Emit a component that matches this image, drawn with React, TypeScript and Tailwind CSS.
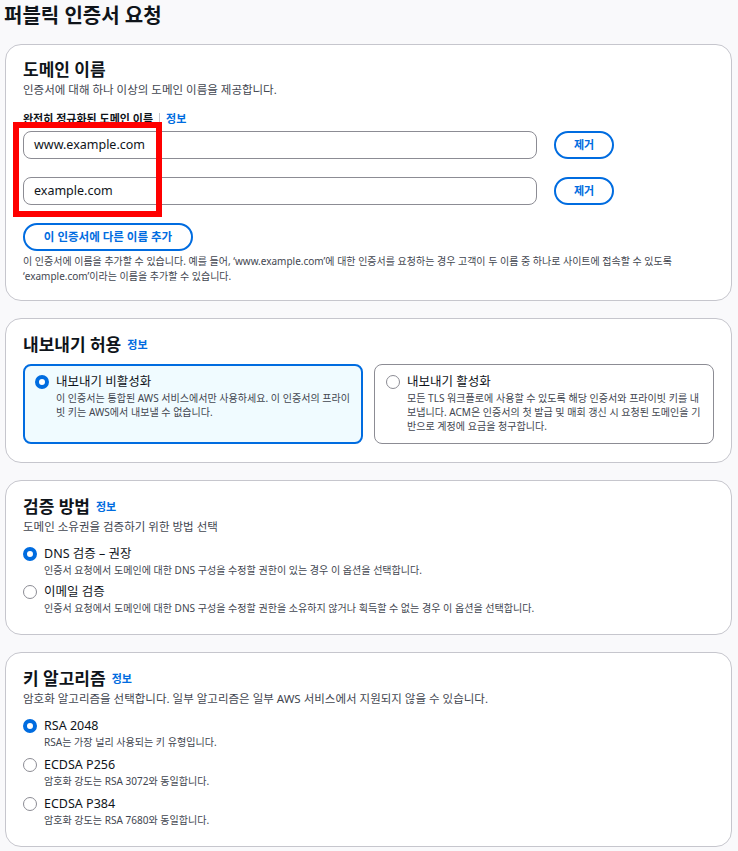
import React from "react";

const FONT = { fontFamily: '"Noto Sans", "Noto Sans CJK KR", sans-serif' };

function Radio({ checked }: { checked: boolean }) {
  return checked ? (
    <span className="mt-[2px] box-border inline-block h-[14px] w-[14px] shrink-0 rounded-full border-[4px] border-[#006ce0] bg-white" />
  ) : (
    <span className="mt-[2px] box-border inline-block h-[14px] w-[14px] shrink-0 rounded-full border-[1.5px] border-[#8c8c94] bg-white" />
  );
}

function Info() {
  return <span className="ml-[6px] text-[11px] font-bold text-[#006ce0]">정보</span>;
}

function Option({ checked, label, desc }: { checked: boolean; label: string; desc: string }) {
  return (
    <div className="flex gap-[7px]">
      <Radio checked={checked} />
      <div className="flex flex-col">
        <span className="text-[12.5px] leading-[18px] text-[#0f141a]">{label}</span>
        <span className="text-[10.05px] leading-[14px] text-[#424650]">{desc}</span>
      </div>
    </div>
  );
}

function Card({ children, className = "" }: { children: React.ReactNode; className?: string }) {
  return (
    <div className={"rounded-[16px] border border-[#c6c6cd] bg-white px-[17px] " + className}>{children}</div>
  );
}

export default function App() {
  return (
    <div style={FONT} className="relative min-h-screen bg-[#f9f9fb] pl-[5px] pr-[6px] pb-4 text-[#0f141a]">
      <h1 className="-ml-[1px] pt-[3px] text-[20px] font-bold leading-[26px]">퍼블릭 인증서 요청</h1>
      <div className="mt-[15px] flex flex-col gap-[17px]">
        {/* Domain names */}
        <Card className="pt-[14px] pb-[16px]">
          <h2 className="text-[17px] font-bold leading-[22px]">도메인 이름</h2>
          <p className="mt-[1px] text-[11.5px] leading-[16px] text-[#424650]">인증서에 대해 하나 이상의 도메인 이름을 제공합니다.</p>
          <div className="mt-[13px] flex items-center text-[11px] font-bold leading-[16px]">
            <span>완전히 정규화된 도메인 이름</span>
            <span className="mx-[6px] h-[12px] w-px bg-[#c6c6cd]" />
            <span className="text-[#006ce0]">정보</span>
          </div>
          <div className="mt-[4px] flex flex-col gap-[18px]">
            {["www.example.com", "example.com"].map((v) => (
              <div key={v} className="flex items-center gap-[17px]">
                <div className="flex h-[28px] w-[514px] items-center rounded-[8px] border border-[#8c8c94] px-[10px] text-[12.5px]">
                  {v}
                </div>
                <button className="h-[28px] w-[60px] rounded-full border-2 border-[#006ce0] text-[11px] font-bold text-[#006ce0]">
                  제거
                </button>
              </div>
            ))}
          </div>
          <button className="mt-[18px] h-[28px] w-[170px] rounded-full border-2 border-[#006ce0] text-[11.5px] font-bold text-[#006ce0]">
            이 인증서에 다른 이름 추가
          </button>
          <p className="mt-[3px] text-[10px] leading-[15px] text-[#424650]">
            이 인증서에 이름을 추가할 수 있습니다. 예를 들어, ‘www.example.com’에 대한 인증서를 요청하는 경우 고객이 두 이름 중 하나로 사이트에 접속할 수 있도록
            <br />
            ‘example.com’이라는 이름을 추가할 수 있습니다.
          </p>
        </Card>

        {/* Export */}
        <Card className="pt-[15px] pb-[18px]">
          <h2 className="flex items-center text-[17px] font-bold leading-[22px]">
            내보내기 허용
            <Info />
          </h2>
          <div className="mt-[8px] grid grid-cols-2 gap-[11px]">
            <div className="h-[80px] rounded-[8px] border-2 border-[#006ce0] bg-[#f0fbff] pl-[10px] pr-[7px] pt-[7px]">
              <Option
                checked
                label="내보내기 비활성화"
                desc="이 인증서는 통합된 AWS 서비스에서만 사용하세요. 이 인증서의 프라이빗 키는 AWS에서 내보낼 수 없습니다."
              />
            </div>
            <div className="h-[80px] rounded-[8px] border border-[#8c8c94] bg-white pl-[11px] pr-[7px] pt-[8px]">
              <Option
                checked={false}
                label="내보내기 활성화"
                desc="모든 TLS 워크플로에 사용할 수 있도록 해당 인증서와 프라이빗 키를 내보냅니다. ACM은 인증서의 첫 발급 및 매회 갱신 시 요청된 도메인을 기반으로 계정에 요금을 청구합니다."
              />
            </div>
          </div>
        </Card>

        {/* Validation */}
        <Card className="pt-[15px] pb-[19px]">
          <h2 className="flex items-center text-[17px] font-bold leading-[22px]">
            검증 방법
            <Info />
          </h2>
          <p className="mt-[1px] text-[11.5px] leading-[16px] text-[#424650]">도메인 소유권을 검증하기 위한 방법 선택</p>
          <div className="mt-[10px] flex flex-col gap-[6px]">
            <Option
              checked
              label="DNS 검증 – 권장"
              desc="인증서 요청에서 도메인에 대한 DNS 구성을 수정할 권한이 있는 경우 이 옵션을 선택합니다."
            />
            <Option
              checked={false}
              label="이메일 검증"
              desc="인증서 요청에서 도메인에 대한 DNS 구성을 수정할 권한을 소유하지 않거나 획득할 수 없는 경우 이 옵션을 선택합니다."
            />
          </div>
        </Card>

        {/* Key algorithm */}
        <Card className="pt-[15px] pb-[19px]">
          <h2 className="flex items-center text-[17px] font-bold leading-[22px]">
            키 알고리즘
            <Info />
          </h2>
          <p className="mt-[1px] text-[11.5px] leading-[16px] text-[#424650]">
            암호화 알고리즘을 선택합니다. 일부 알고리즘은 일부 AWS 서비스에서 지원되지 않을 수 있습니다.
          </p>
          <div className="mt-[10px] flex flex-col gap-[7px]">
            <Option checked label="RSA 2048" desc="RSA는 가장 널리 사용되는 키 유형입니다." />
            <Option checked={false} label="ECDSA P256" desc="암호화 강도는 RSA 3072와 동일합니다." />
            <Option checked={false} label="ECDSA P384" desc="암호화 강도는 RSA 7680와 동일합니다." />
          </div>
        </Card>
      </div>

      {/* red annotation box */}
      <div className="pointer-events-none absolute left-[13px] top-[122px] h-[95px] w-[149px] border-[6px] border-[#ff0000]" />
    </div>
  );
}
